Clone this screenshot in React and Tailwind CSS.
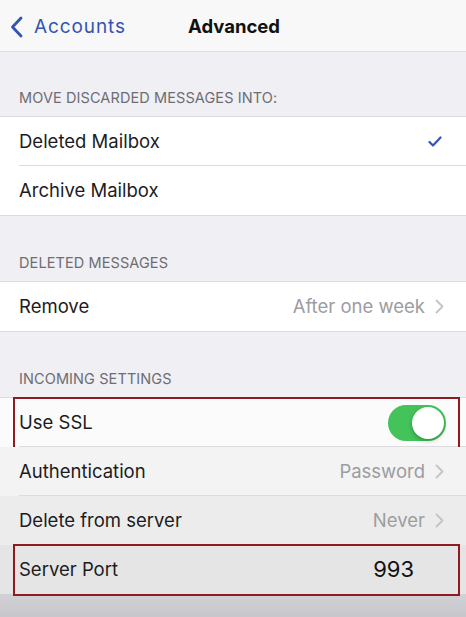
import React from 'react';

const Chevron = () => (
  <svg width="9" height="15" viewBox="0 0 9 15" className="ml-[10px] text-[#c4c4c8]">
    <path d="M1.5 1.5 L7.5 7.5 L1.5 13.5" fill="none" stroke="currentColor" strokeWidth="1.8" strokeLinecap="round" strokeLinejoin="round" />
  </svg>
);

const Header = ({ children, className = '' }) => (
  <div className={`flex items-end px-[19px] pb-[7px] text-[14.5px] text-[#6d6d72] tracking-[0.1px] ${className}`}>
    {children}
  </div>
);

const Row = ({ label, right, divider, bg = 'bg-white', boxed }) => (
  <div className={`relative h-[49px] ${bg}`}>
    <div className="flex h-full items-center pl-[19px] pr-[22px]">
      <span className="flex-1 text-[18.5px] text-[#1c1c1e]">{label}</span>
      {right}
    </div>
    {divider && <div className="absolute bottom-0 left-[19px] right-0 h-px bg-[#dcdce0]" />}
    {boxed && <div className="absolute -top-[1px] left-[13px] right-[6px] bottom-[-2px] border-2 border-[#8e1b22]" />}
  </div>
);

const Value = ({ text }) => (
  <span className="flex items-center text-[18.5px] text-[#9c9ca1]">
    {text}
    <Chevron />
  </span>
);

export default function App() {
  return (
    <div className="w-[466px] h-[617px] overflow-hidden bg-[#efeff4] font-['Inter','Liberation_Sans',sans-serif]">
      {/* nav */}
      <div className="relative h-[52px] bg-[#f8f8f8] border-b border-[#dedee2] flex items-center pt-[3px]">
        <div className="flex items-center pl-[10px] text-[#3453b4]">
          <svg width="13" height="22" viewBox="0 0 13 22">
            <path d="M11 2 L2.5 11 L11 20" fill="none" stroke="currentColor" strokeWidth="2.8" strokeLinecap="round" strokeLinejoin="round" />
          </svg>
          <span className="ml-[11px] text-[19px] tracking-[0.9px]">Accounts</span>
        </div>
        <span className="absolute left-[188px] text-[18.5px] font-bold text-[#111]">Advanced</span>
      </div>

      <Header className="h-[64px]">MOVE DISCARDED MESSAGES INTO:</Header>
      <div className="border-y border-[#dcdce0]">
        <Row
          label="Deleted Mailbox"
          divider
          right={
            <svg width="14" height="11" viewBox="0 0 14 11" className="mr-[2px]">
              <path d="M1.5 6 L5 9.5 L12.5 1.5" fill="none" stroke="#3453b4" strokeWidth="2.2" strokeLinecap="round" strokeLinejoin="round" />
            </svg>
          }
        />
        <Row label="Archive Mailbox" />
      </div>

      <Header className="h-[65px]">DELETED MESSAGES</Header>
      <div className="border-y border-[#dcdce0]">
        <Row label="Remove" right={<Value text="After one week" />} />
      </div>

      <Header className="h-[65px]">INCOMING SETTINGS</Header>
      <div className="border-t border-[#dcdce0]">
        <Row
          label="Use SSL"
          bg="bg-[#fbfbfb]"
          boxed
          divider
          right={
            <div className="relative w-[58px] h-[36px] rounded-full bg-[#43c35a] mr-[-2px]">
              <div className="absolute right-[2px] top-[2px] w-[32px] h-[32px] rounded-full bg-white shadow-[0_2px_4px_rgba(0,0,0,0.25)]" />
            </div>
          }
        />
        <Row label="Authentication" bg="bg-[#f3f3f3]" divider right={<Value text="Password" />} />
        <Row label="Delete from server" bg="bg-[#ececec]" right={<Value text="Never" />} />
        <Row
          label="Server Port"
          bg="bg-[#e5e5e5]"
          boxed
          right={<span className="mr-[30px] text-[22px] text-[#111]">993</span>}
        />
      </div>
      <div className="h-[30px] bg-gradient-to-b from-[#d2d2d6] to-[#c4c4c8]" />
    </div>
  );
}
